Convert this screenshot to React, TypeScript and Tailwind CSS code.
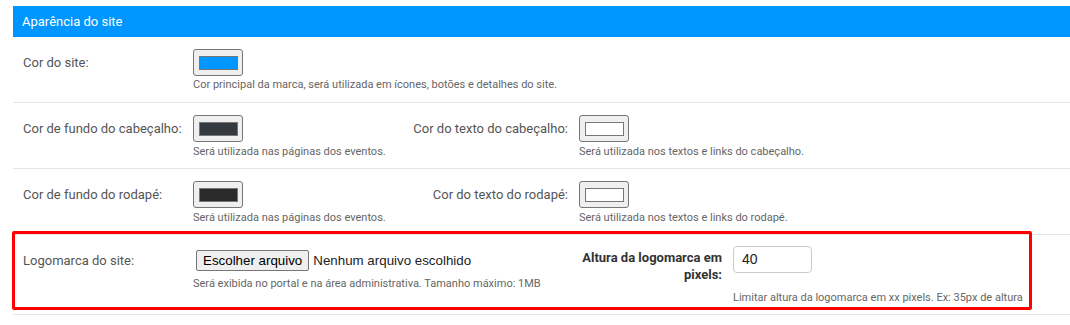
import React from "react";

function Swatch({ color }: { color: string }) {
  return (
    <div className="w-[50px] h-[27px] bg-[#efefef] border border-[#767676] rounded-[3px] flex items-center justify-center">
      <div className="w-[39px] h-[14px] border border-[#777777]" style={{ backgroundColor: color }} />
    </div>
  );
}

function Help({ children, className = "" }: { children: React.ReactNode; className?: string }) {
  return <div className={`text-[11px] leading-[15px] text-[#666666] whitespace-nowrap ${className}`}>{children}</div>;
}

const label = "text-[13px] leading-[27px] text-[#555555] whitespace-nowrap";

export default function App() {
  return (
    <div className="relative w-[1070px] h-[325px] bg-white pt-[6px] font-['Roboto',_'Liberation_Sans',_sans-serif]">
      <div className="ml-[13px] w-[1057px]">
        <div className="h-[31px] bg-[#0096ff] text-white text-[13px] leading-[31px] pl-[9px]">Aparência do site</div>

        {/* Row 1 */}
        <div className="flex px-[10px] pt-[12px] pb-[9px] border-b border-[#e5e5e5] h-[66px]">
          <div className={`w-[170px] ${label}`}>Cor do site:</div>
          <div>
            <Swatch color="#0096ff" />
            <Help className="mt-[1px]">Cor principal da marca, será utilizada em ícones, botões e detalhes do site.</Help>
          </div>
        </div>

        {/* Row 2 */}
        <div className="flex px-[10px] pt-[12px] border-b border-[#e5e5e5] h-[66px]">
          <div className={`w-[170px] ${label}`}>Cor de fundo do cabeçalho:</div>
          <div className="w-[210px]">
            <Swatch color="#343a40" />
            <Help className="mt-[2px]">Será utilizada nas páginas dos eventos.</Help>
          </div>
          <div className={`w-[165px] text-right ${label}`}>Cor do texto do cabeçalho:</div>
          <div className="ml-[11px]">
            <Swatch color="#ffffff" />
            <Help className="mt-[2px]">Será utilizada nos textos e links do cabeçalho.</Help>
          </div>
        </div>

        {/* Row 3 */}
        <div className="flex px-[10px] pt-[12px] border-b border-[#e5e5e5] h-[66px]">
          <div className={`w-[170px] ${label}`}>Cor de fundo do rodapé:</div>
          <div className="w-[210px]">
            <Swatch color="#2a2a2a" />
            <Help className="mt-[2px]">Será utilizada nas páginas dos eventos.</Help>
          </div>
          <div className={`w-[165px] text-right ${label}`}>Cor do texto do rodapé:</div>
          <div className="ml-[11px]">
            <Swatch color="#ffffff" />
            <Help className="mt-[2px]">Será utilizada nos textos e links do rodapé.</Help>
          </div>
        </div>

        {/* Row 4 */}
        <div className="flex px-[10px] pt-[11px] border-b border-[#e5e5e5] h-[80px]">
          <div className={`w-[170px] pt-[1px] ${label}`}>Logomarca do site:</div>
          <div className="w-[379px] pt-[4px]">
            <div className="flex items-center ml-[3px]">
              <div className="h-[21px] px-[6px] bg-[#efefef] border border-[#767676] rounded-[2px] text-[13.33px] leading-[19px] text-black font-['Liberation_Sans',_sans-serif] whitespace-nowrap">Escolher arquivo</div>
              <span className="ml-[4px] text-[13.33px] leading-[21px] text-[#222222] font-['Liberation_Sans',_sans-serif] whitespace-nowrap">Nenhum arquivo escolhido</span>
            </div>
            <Help className="mt-[5px]">Será exibida no portal e na área administrativa. Tamanho máximo: 1MB</Help>
          </div>
          <div className="w-[150px] pt-[3px] text-right text-[13px] leading-[17px] font-bold text-[#333333]">Altura da logomarca em pixels:</div>
          <div className="ml-[11px]">
            <div className="w-[79px] h-[27px] border border-[#cccccc] rounded-[4px] pl-[8px] text-[14px] leading-[25px] text-[#222222] font-['Liberation_Sans',_sans-serif]">40</div>
            <Help className="mt-[17px]">Limitar altura da logomarca em xx pixels. Ex: 35px de altura</Help>
          </div>
        </div>
      </div>

      <div className="absolute left-[12px] top-[231px] w-[1020px] h-[79px] border-[3px] border-[#ff0000] rounded-[2px] pointer-events-none" />
    </div>
  );
}
